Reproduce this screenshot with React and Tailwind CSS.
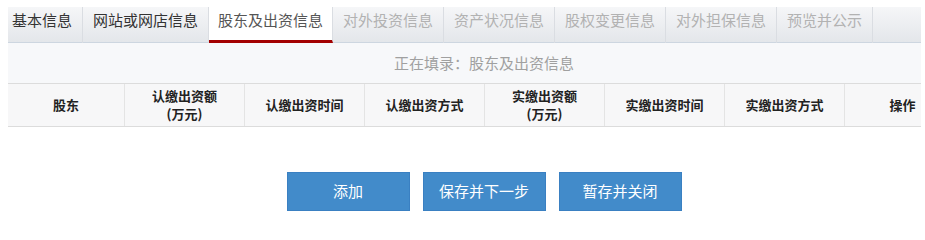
import React from 'react';

const tabs = [
  { label: '基本信息', state: 'done', first: true },
  { label: '网站或网店信息', state: 'done' },
  { label: '股东及出资信息', state: 'active' },
  { label: '对外投资信息', state: 'off' },
  { label: '资产状况信息', state: 'off' },
  { label: '股权变更信息', state: 'off' },
  { label: '对外担保信息', state: 'off' },
  { label: '预览并公示', state: 'off' },
];

const columns = [
  { w: 'w-[117px]', lines: ['股东'] },
  { w: 'w-[120px]', lines: ['认缴出资额', '(万元)'] },
  { w: 'w-[120px]', lines: ['认缴出资时间'] },
  { w: 'w-[120px]', lines: ['认缴出资方式'] },
  { w: 'w-[120px]', lines: ['实缴出资额', '(万元)'] },
  { w: 'w-[120px]', lines: ['实缴出资时间'] },
  { w: 'w-[120px]', lines: ['实缴出资方式'] },
  { w: 'flex-1', lines: ['操作'], last: true },
];

const buttons = ['添加', '保存并下一步', '暂存并关闭'];

export default function App() {
  return (
    <div className="pt-[7px] pl-2 bg-white font-['Noto_Sans_CJK_SC','Noto_Sans',sans-serif]">
      <div className="w-[913px] overflow-hidden">
        <div className="w-[952px]">
          {/* Tabs */}
          <div className="flex h-[36px] bg-gradient-to-b from-[#f5f6f8] to-[#e3e6ea] shadow-[inset_0_-1px_0_#cdd6e0]">
            {tabs.map((t) => (
              <div
                key={t.label}
                className={`h-[36px] border-r border-[#dadde2] text-[15px] leading-[26px] whitespace-nowrap ${
                  t.state === 'active'
                    ? 'px-[9px] bg-white text-[#555] border-b-[3px] border-b-[#a30000]'
                    : t.state === 'done'
                    ? 'text-[#333]'
                    : 'text-[#b2b2b2]'
                } ${t.state !== 'active' ? (t.first ? 'pl-1 pr-[10px]' : 'px-[10px]') : ''}`}
              >
                {t.label}
              </div>
            ))}
          </div>

          {/* Current step */}
          <div className="h-[40px] bg-[#f7f8fa] flex items-center justify-center text-[15px] text-[#a0a0a0]">
            正在填录：股东及出资信息
          </div>

          {/* Table header */}
          <div className="flex h-[44px] bg-[#f7f7f8] border-y border-[#dcdcdc]">
            {columns.map((c, i) => (
              <div
                key={i}
                className={`${c.w} flex flex-col items-center justify-center text-[13px] leading-[18px] font-bold text-[#222] ${
                  c.last ? '' : 'border-r border-[#e4e4e4]'
                }`}
              >
                {c.lines.map((l) => (
                  <span key={l}>{l}</span>
                ))}
              </div>
            ))}
          </div>

          {/* Actions */}
          <div className="mt-[45px] flex justify-center gap-[13px] pb-[28px]">
            {buttons.map((b) => (
              <button
                key={b}
                className="w-[123px] h-[39px] bg-[#428bca] border border-[#3a80c2] text-white text-[15px]"
              >
                {b}
              </button>
            ))}
          </div>
        </div>
      </div>
    </div>
  );
}
